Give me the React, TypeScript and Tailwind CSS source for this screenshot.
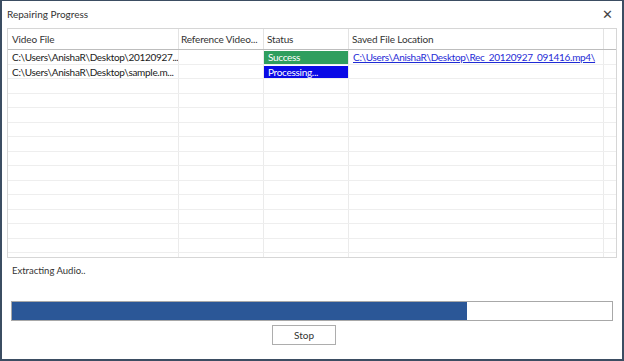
const rows = [
  { file: "C:\\Users\\AnishaR\\Desktop\\20120927...", ref: "", status: "Success", saved: "C:\\Users\\AnishaR\\Desktop\\Rec_20120927_091416.mp4\\" },
  { file: "C:\\Users\\AnishaR\\Desktop\\sample.m...", ref: "", status: "Processing...", saved: "" },
]

const emptyRows = Array.from({ length: 13 })

const Row = ({ file, ref, status, saved }: { file?: string; ref?: string; status?: string; saved?: string }) => {
  const statusCls =
    status === "Success"
      ? "bg-[#2f9e5e] text-white"
      : status === "Processing..."
        ? "bg-[#0a0ae6] text-white"
        : ""
  return (
    <div className="flex h-[14.5px] shrink-0 whitespace-nowrap border-b border-[#eeeeee] text-[10px] leading-[15px] tracking-[-0.3px] text-[#1a1a1a]">
      <div className="w-[171px] shrink-0 overflow-hidden border-r border-[#ebebeb] pl-[4px]">{file}</div>
      <div className="w-[85px] shrink-0 overflow-hidden border-r border-[#ebebeb] pl-[4px]">{ref}</div>
      <div className="w-[85px] shrink-0 border-r border-[#ebebeb] pt-[1px]">
        <div className={`h-full pl-[4px] leading-[13px] ${statusCls}`}>{status}</div>
      </div>
      <div className="w-[255px] shrink-0 overflow-hidden border-r border-[#ebebeb] pl-[4px]">
        <span className="text-[#1f2bd6] underline">{saved}</span>
      </div>
      <div className="flex-1" />
    </div>
  )
}

export default function App() {
  return (
    <div
      className="w-[624px] h-[361px] bg-[#3b4d62] p-[2px] pt-[1px] pb-[2px]"
      style={{ fontFamily: 'Lato, "Liberation Sans", Arial, sans-serif' }}
    >
      <div className="flex h-full flex-col bg-white">
        <div className="flex h-[27px] items-center justify-between pl-[5px] pr-[9px]">
          <span className="text-[10px] text-[#333]">Repairing Progress</span>
          <span className="text-[13px] leading-none text-[#444]">✕</span>
        </div>
        <div className="mx-[5px] flex h-[230px] flex-col overflow-hidden border border-[#d6d6d6]">
          <div className="flex h-[21px] shrink-0 whitespace-nowrap border-b border-[#bdbdbd] text-[10px] leading-[20px] tracking-[-0.15px] text-[#333]">
            <div className="w-[171px] shrink-0 border-r border-[#e3e3e3] pl-[4px]">Video File</div>
            <div className="w-[85px] shrink-0 overflow-hidden border-r border-[#e3e3e3] pl-[2px]">Reference Video...</div>
            <div className="w-[85px] shrink-0 border-r border-[#e3e3e3] pl-[3px]">Status</div>
            <div className="w-[255px] shrink-0 border-r border-[#e3e3e3] pl-[3px]">Saved File Location</div>
            <div className="flex-1" />
          </div>
          {rows.map((r, i) => (
            <Row key={i} {...r} />
          ))}
          {emptyRows.map((_, i) => (
            <Row key={"e" + i} />
          ))}
        </div>
        <div className="pl-[10px] pt-[6px] text-[9.5px] text-[#333]">Extracting Audio..</div>
        <div className="mx-[9px] mt-[23px] h-[20px] border border-[#a8a8a8] bg-white">
          <div className="h-full bg-[#2b5797]" style={{ width: "75.9%" }} />
        </div>
        <div className="mt-[4px] flex justify-center">
          <button className="ml-[-16px] h-[20px] w-[64px] border border-[#adadad] bg-white text-[10px] text-[#333]">
            Stop
          </button>
        </div>
      </div>
    </div>
  )
}
